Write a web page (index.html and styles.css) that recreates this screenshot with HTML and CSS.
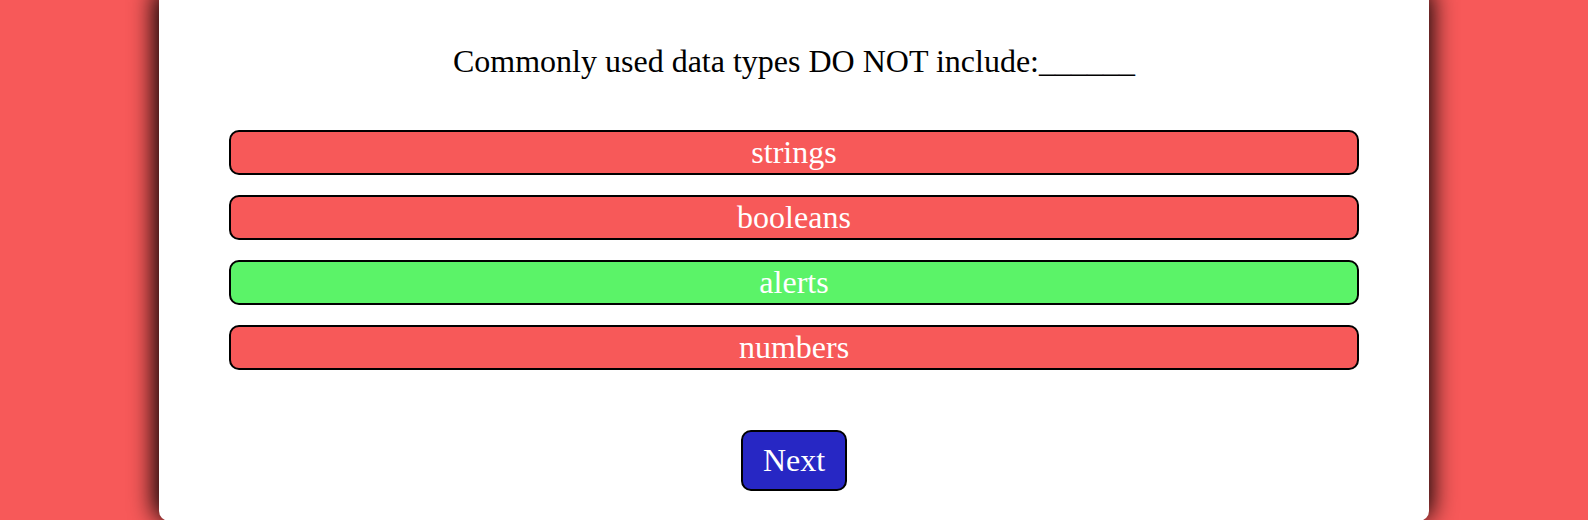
FILE: index.html
```html
<!DOCTYPE html>
<html lang="en">
<head>
<meta charset="utf-8">
<meta name="viewport" content="width=device-width, initial-scale=1">
<title>Quiz</title>
<link rel="stylesheet" href="styles.css">
</head>
<body class="page">
<main class="card">
  <p class="question">Commonly used data types DO NOT include:______</p>
  <div class="answers">
    <button class="answer" type="button">strings</button>
    <button class="answer" type="button">booleans</button>
    <button class="answer answer-correct" type="button">alerts</button>
    <button class="answer" type="button">numbers</button>
  </div>
  <button class="next" type="button">Next</button>
</main>
</body>
</html>
```
FILE: styles.css
```css
* {
  box-sizing: border-box;
}

.page {
  margin: 0;
  background: #f75959;
  font-family: "Liberation Serif", "Times New Roman", serif;
  font-size: 32px;
  line-height: 37px;
  overflow: hidden;
}

.card {
  display: flex;
  flex-direction: column;
  align-items: center;
  width: 80%;
  margin: 0 auto;
  padding: 43px 70px 30px;
  background: #fff;
  border-radius: 0 0 10px 10px;
  box-shadow: -1px -5px 25px 4px #000;
}

.question {
  margin: 0 0 50px;
  color: #000;
  text-align: center;
}

.answers {
  display: flex;
  flex-direction: column;
  gap: 20px;
  width: 100%;
}

.answer,
.next {
  border: 2px solid #000;
  border-radius: 10px;
  color: #fff;
  font: inherit;
  cursor: pointer;
}

.answer {
  padding: 2px 6px;
  background: #f75959;
}

.answer-correct {
  background: #5bf368;
}

.next {
  margin-top: 60px;
  padding: 10px 20px;
  background: #2727c4;
}
```
